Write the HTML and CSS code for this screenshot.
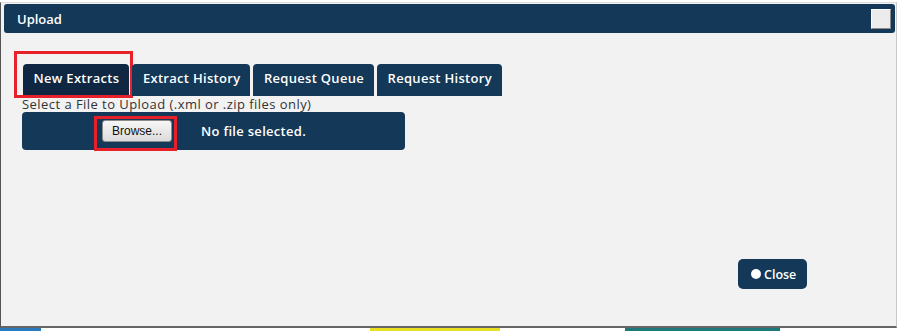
FILE: index.html
```html
<!doctype html>
<html lang="en">
<head>
  <meta charset="utf-8">
  <title>Upload</title>
  <link rel="stylesheet" href="styles.css">
</head>
<body>
<div class="topline"></div>
<div class="dialog">
  <div class="titlebar">
    <span class="title">Upload</span>
    <span class="closebox"></span>
  </div>
  <div class="content">
    <div class="tabs">
      <div class="tab active">New Extracts<span class="mark mark-tab"></span></div>
      <div class="tab">Extract History</div>
      <div class="tab">Request Queue</div>
      <div class="tab">Request History</div>
    </div>
    <div class="hint">Select a File to Upload (.xml or .zip files only)</div>
    <div class="filepanel">
      <span class="browse">Browse...<span class="mark mark-btn"></span></span>
      <span class="nofile">No file selected.</span>
    </div>
    <div class="footer">
      <button class="closebtn"><span class="dot"></span>Close</button>
    </div>
  </div>
</div>
<div class="under">
  <span class="seg blue"></span>
  <span class="seg yellow"></span>
  <span class="seg teal"></span>
</div>
</body>
</html>
```

FILE: styles.css
```css
body {
  margin: 0;
  background: #fff;
  font-family: "Open Sans", "DejaVu Sans", sans-serif;
}

.topline {
  height: 2px;
  background: #fff;
}

/* dialog */
.dialog {
  width: 895px;
  height: 323px;
  background: #f2f2f2;
  border-left: 1px solid #555;
  border-right: 1px solid #c8c8c8;
  border-top: 1px solid #ddd;
  border-bottom: 2px solid #666;
  display: flex;
  flex-direction: column;
}

.titlebar {
  margin: 1px 1px 0 3px;
  height: 29px;
  background: #143858;
  border-radius: 3px;
  display: flex;
  align-items: center;
  justify-content: space-between;
  padding: 0 4px 0 13px;
}
.title {
  color: #fff;
  font-size: 13px;
  font-weight: 600;
}
.closebox {
  width: 18px;
  height: 18px;
  background: #ececec;
  border: 1px solid #fafafa;
  border-right-color: #8a8a8a;
  border-bottom-color: #8a8a8a;
}

.content {
  flex: 1;
  display: flex;
  flex-direction: column;
  padding: 31px 0 0 21px;
}

/* tabs */
.tabs {
  display: flex;
  gap: 3px;
  margin-left: 1px;
}
.tab {
  position: relative;
  height: 32px;
  line-height: 29px;
  padding: 0 10px 0 10.5px;
  background: #143858;
  color: #fff;
  font-size: 13px;
  letter-spacing: 0.3px;
  font-weight: 600;
  border-radius: 4px 4px 0 0;
}
.tab.active {
  background: #0f2742;
}

/* red annotation boxes */
.mark {
  position: absolute;
  border: 3px solid #e8202a;
  pointer-events: none;
}
.mark-tab {
  left: -9px;
  top: -13px;
  width: 113px;
  height: 41px;
}
.mark-btn {
  left: -9px;
  top: -5px;
  width: 77px;
  height: 29px;
}

.hint {
  color: #333;
  font-size: 13px;
  letter-spacing: 0.45px;
  line-height: 16px;
}

.filepanel {
  width: 383px;
  height: 38px;
  background: #143858;
  border-radius: 4px;
  display: flex;
  align-items: center;
}
.browse {
  position: relative;
  margin-left: 80px;
  width: 68px;
  height: 20px;
  line-height: 20px;
  text-align: center;
  font-family: "Liberation Sans", Arial, sans-serif;
  font-size: 12px;
  color: #111;
  background: linear-gradient(#f6f6f6, #dcdcdc);
  border: 1px solid #8c8c8c;
  border-radius: 3px;
}
.nofile {
  margin-left: 29px;
  color: #fff;
  font-size: 13px;
  letter-spacing: 0.3px;
  font-weight: 600;
}

.footer {
  margin-top: auto;
  margin-bottom: 37px;
  display: flex;
  justify-content: flex-end;
  padding-right: 89px;
}
.closebtn {
  width: 69px;
  height: 30px;
  border: 0;
  border-radius: 5px;
  background: #143858;
  color: #fff;
  font-family: "Open Sans", "DejaVu Sans", sans-serif;
  font-size: 12.5px;
  font-weight: 600;
  display: flex;
  align-items: center;
  padding: 0 0 0 13px;
  gap: 3px;
}
.dot {
  width: 10px;
  height: 10px;
  border-radius: 50%;
  background: #fff;
}

/* page behind the dialog */
.under {
  display: flex;
  height: 3px;
}
.seg { display: block; height: 3px; }
.blue { width: 41px; background: #2a7bbd; }
.yellow { width: 130px; background: #e8e020; margin-left: 329px; }
.teal { width: 155px; background: #1c7a7a; margin-left: 125px; }
```
